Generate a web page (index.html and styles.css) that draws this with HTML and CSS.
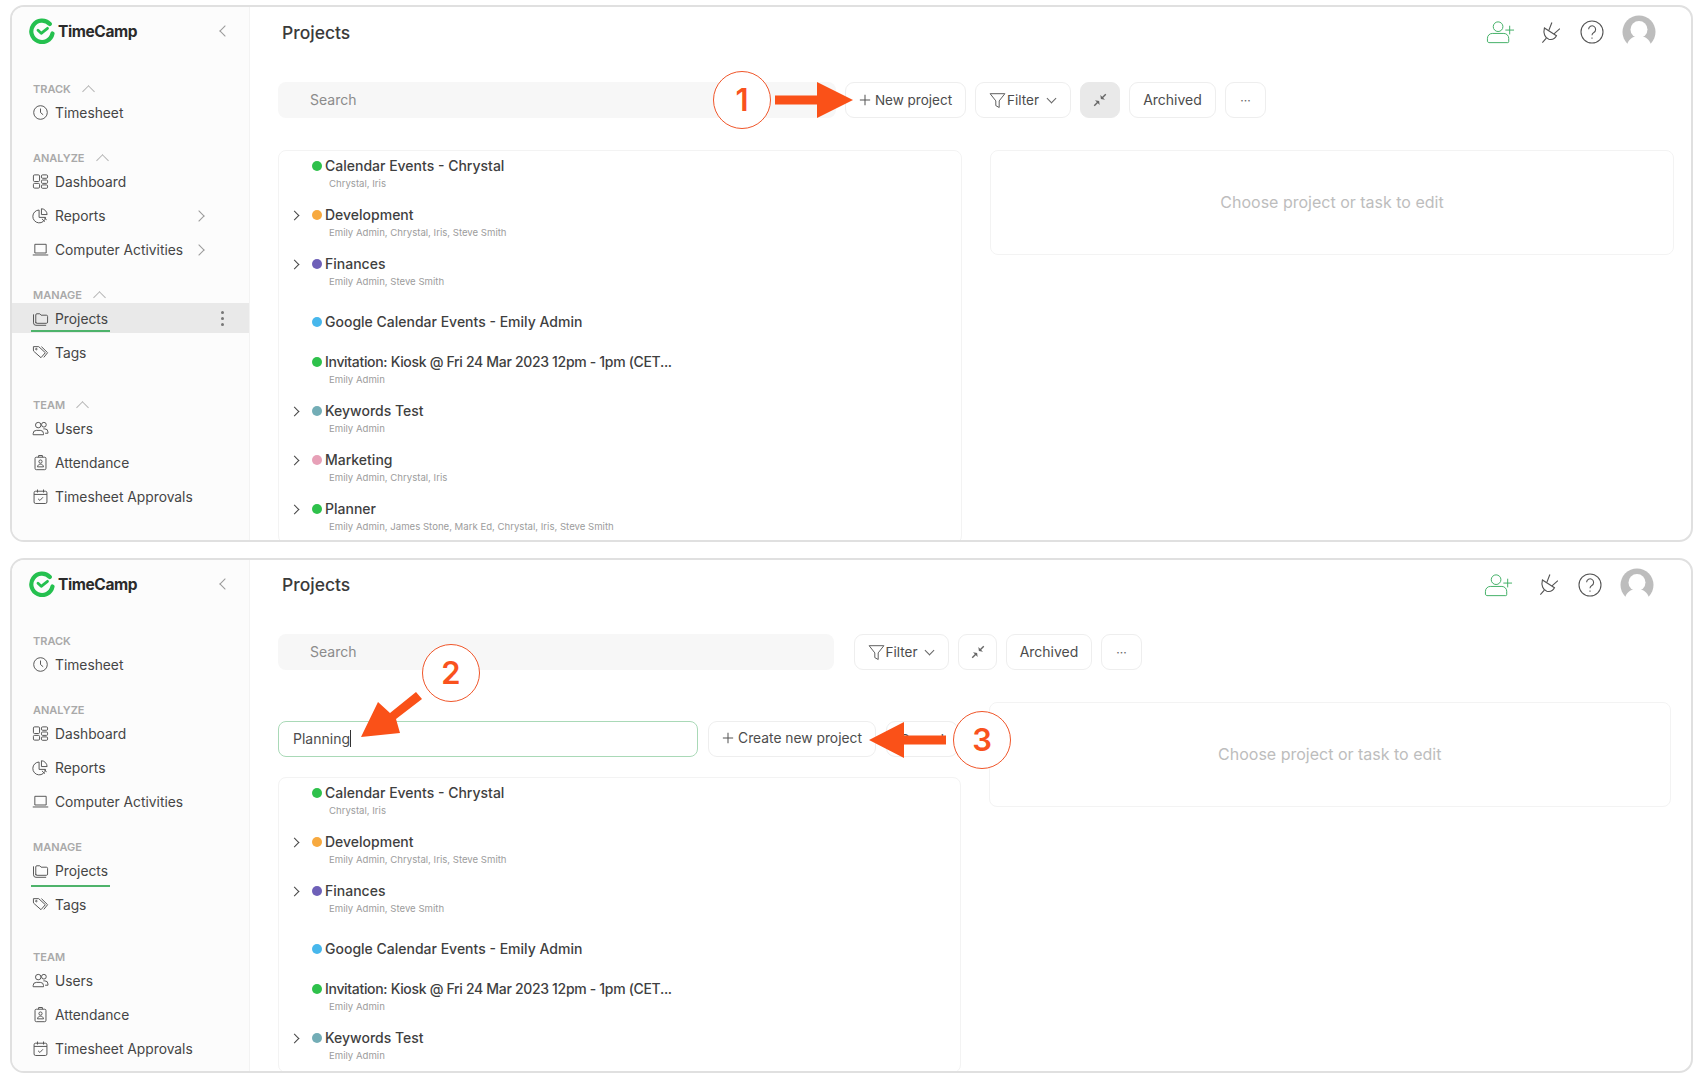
FILE: index.html
```html
<!DOCTYPE html>
<html lang="en">
<head>
<meta charset="utf-8">
<title>TimeCamp Projects</title>
<link rel="stylesheet" href="styles.css">
</head>
<body>
<svg class="defs" width="0" height="0" aria-hidden="true">
  <symbol id="i-clock" viewBox="0 0 18 18"><circle cx="9" cy="9" r="7.2"/><path d="M9 4.8V9l2.8 2.4"/></symbol>
  <symbol id="i-dash" viewBox="0 0 18 18"><rect x="1.5" y="2" width="6.5" height="7" rx="1.2"/><rect x="1.5" y="11" width="6.5" height="5" rx="1.2"/><rect x="10" y="2" width="6.5" height="3.6" rx="1.2"/><rect x="10" y="7.4" width="6.5" height="3.6" rx="1.2"/><rect x="10" y="12.6" width="6.5" height="3.6" rx="1.2"/></symbol>
  <symbol id="i-reports" viewBox="0 0 18 18"><path d="M7.5 3.2A6.8 6.8 0 1 0 14.4 11H7.5z"/><path d="M10 1.8a6.4 6.4 0 0 1 6 6.2h-6z"/><path d="M10.5 12.5l3 3M13 11.5l2.5 2"/></symbol>
  <symbol id="i-laptop" viewBox="0 0 18 18"><path d="M3 3.5h12v9.2H3zM.8 14.8h16.4"/></symbol>
  <symbol id="i-folder" viewBox="0 0 18 18"><path d="M4 14V5.2a1.2 1.2 0 0 1 1.2-1.2h3l1.4 1.5h5.6a1.3 1.3 0 0 1 1.3 1.3v6a1.3 1.3 0 0 1-1.3 1.3H5.4A1.4 1.4 0 0 1 4 12.6"/><path d="M1.6 4.6v9a2.6 2.6 0 0 0 2.6 2.6H15"/></symbol>
  <symbol id="i-tag" viewBox="0 0 18 18"><path d="M1.5 4.2V2.8h5.6l7 6.4-4.6 5.3-7-6.2a2 2 0 0 1-1-1.8z"/><path d="M10 2.8l6.5 6.4-4 5"/><circle cx="4.6" cy="5.4" r=".8"/></symbol>
  <symbol id="i-users" viewBox="0 0 18 18"><circle cx="6.6" cy="5.4" r="2.9"/><circle cx="12.6" cy="5" r="2.5"/><path d="M1.2 15.6v-1.2a3.4 3.4 0 0 1 3.4-3.4h4.2a3.4 3.4 0 0 1 3.4 3.4v1.2z"/><path d="M12 9.4h1.6a3.3 3.3 0 0 1 3.3 3.3V14h-3"/></symbol>
  <symbol id="i-badge" viewBox="0 0 18 18"><rect x="3.2" y="3.4" width="11.6" height="13.2" rx="1.4"/><path d="M7 3.4V1.6h4v1.8"/><circle cx="9" cy="8" r="1.7"/><path d="M5.8 13.6c.4-2 1.5-2.8 3.2-2.8s2.8.8 3.2 2.8z"/></symbol>
  <symbol id="i-cal" viewBox="0 0 18 18"><rect x="2.2" y="3.4" width="13.6" height="13" rx="1.6"/><path d="M2.2 6.8h13.6M5.8 1.6v3.2M12.2 1.6v3.2M6.4 11.4l2 1.8 3.2-3.4"/></symbol>
  <symbol id="i-pin" viewBox="0 0 18 18"><path d="M15.5 2.5L11 7M2.500 15.500L7 11"/><path class="pin-head" d="M9.400 3.400l.6 4.600 4.600.6zM3.400 9.400l4.600.6.6 4.600z"/></symbol>
  <symbol id="i-filter" viewBox="0 0 18 18"><path d="M1.2 1.800h15.600L10.800 9.400v7l-3.600-2V9.400z"/></symbol>
  <symbol id="i-plus" viewBox="0 0 14 14"><path d="M7 1v12M1 7h12"/></symbol>
  <symbol id="i-logo" viewBox="0 0 26 26"><path class="logo-arc" d="M20.8 6A10.7 10.700 0 1 0 23.500 15.500"/><path class="logo-check" d="M9 12.300l3.200 3 6.300-5"/></symbol>
  <symbol id="i-add" viewBox="0 0 30 24"><circle cx="12.5" cy="6.500" r="5"/><path d="M1.500 22v-3.500a5 5 0 0 1 5-5h12a5 5 0 0 1 5 5V22a1 1 0 0 1-1 1H3z"/><path d="M20 10h9M24.500 5.500v9"/></symbol>
  <symbol id="i-plug" viewBox="0 0 22 24"><path d="M3.600 7.200l12.600 8.200c-1.600 3-4.600 4.500-8 3.600C4.400 17.800 2 13 3.600 7.200z"/><path d="M8.200 9.800L11.400 1.600M13.600 13.400l6.200-5.400M5.600 18L1.400 22.600"/></symbol>
  <symbol id="i-help" viewBox="0 0 24 24"><circle cx="12" cy="12" r="11"/><path d="M8.600 9.200A3.500 3.500 0 1 1 13.800 12.400c-1.200.7-1.800 1.400-1.800 2.800"/><path d="M12 17.400v1.400"/></symbol>
</svg>

<main class="page">

  <section class="window">
    <aside class="sidebar">
      <div class="brand">
        <svg class="logo"><use href="#i-logo"/></svg>
        <span class="brand-name">TimeCamp</span>
        <span class="chev chev-left brand-toggle"></span>
      </div>
      <div class="nav-label">TRACK <span class="chev chev-up"></span></div>
      <div class="nav-item"><svg class="nav-icon"><use href="#i-clock"/></svg>Timesheet</div>
      <div class="nav-label nav-gap">ANALYZE <span class="chev chev-up"></span></div>
      <div class="nav-item"><svg class="nav-icon"><use href="#i-dash"/></svg>Dashboard</div>
      <div class="nav-item"><svg class="nav-icon"><use href="#i-reports"/></svg>Reports<span class="chev chev-right nav-more"></span></div>
      <div class="nav-item"><svg class="nav-icon"><use href="#i-laptop"/></svg>Computer Activities<span class="chev chev-right nav-more"></span></div>
      <div class="nav-label nav-gap">MANAGE <span class="chev chev-up"></span></div>
      <div class="nav-item is-active is-shaded"><svg class="nav-icon"><use href="#i-folder"/></svg>Projects<span class="kebab"><i></i><i></i><i></i></span></div>
      <div class="nav-item"><svg class="nav-icon"><use href="#i-tag"/></svg>Tags</div>
      <div class="nav-label nav-gap-lg">TEAM <span class="chev chev-up"></span></div>
      <div class="nav-item"><svg class="nav-icon"><use href="#i-users"/></svg>Users</div>
      <div class="nav-item"><svg class="nav-icon"><use href="#i-badge"/></svg>Attendance</div>
      <div class="nav-item"><svg class="nav-icon"><use href="#i-cal"/></svg>Timesheet Approvals</div>
    </aside>
    <div class="content">
      <header class="topbar">
        <h1 class="title">Projects</h1>
        <div class="top-icons">
          <svg class="ti ti-add"><use href="#i-add"/></svg>
          <svg class="ti ti-plug"><use href="#i-plug"/></svg>
          <svg class="ti ti-help"><use href="#i-help"/></svg>
          <svg class="avatar" viewBox="0 0 34 34"><circle class="av-bg" cx="17" cy="17" r="16.5"/><circle class="av-fg" cx="17" cy="14.5" r="8.5"/><path class="av-fg" d="M4 34c1-9 6-13 13-13s12 4 13 13z"/></svg>
        </div>
      </header>
      <div class="toolbar">
        <div class="search">Search</div>
        <button class="btn btn-new"><svg class="btn-plus"><use href="#i-plus"/></svg>New project</button>
        <button class="btn btn-filter"><svg class="btn-icon"><use href="#i-filter"/></svg>Filter<span class="chev chev-down"></span></button>
        <button class="btn btn-pin is-on"><svg class="btn-icon"><use href="#i-pin"/></svg></button>
        <button class="btn btn-arch">Archived</button>
        <button class="btn btn-dots">···</button>
      </div>
      <div class="panes">
        <div class="list-col">
          <div class="card list">
            <div class="row"><span class="twist"></span><span class="dot c-green"></span><div class="name">Calendar Events - Chrystal</div><div class="sub">Chrystal, Iris</div></div>
            <div class="row"><span class="twist"><span class="chev chev-right dark"></span></span><span class="dot c-orange"></span><div class="name">Development</div><div class="sub">Emily Admin, Chrystal, Iris, Steve Smith</div></div>
            <div class="row"><span class="twist"><span class="chev chev-right dark"></span></span><span class="dot c-purple"></span><div class="name">Finances</div><div class="sub">Emily Admin, Steve Smith</div></div>
            <div class="row row-solo"><span class="twist"></span><span class="dot c-blue"></span><div class="name">Google Calendar Events - Emily Admin</div></div>
            <div class="row"><span class="twist"></span><span class="dot c-green"></span><div class="name name-tight">Invitation: Kiosk @ Fri 24 Mar 2023 12pm - 1pm (CET...</div><div class="sub">Emily Admin</div></div>
            <div class="row"><span class="twist"><span class="chev chev-right dark"></span></span><span class="dot c-teal"></span><div class="name">Keywords Test</div><div class="sub">Emily Admin</div></div>
            <div class="row"><span class="twist"><span class="chev chev-right dark"></span></span><span class="dot c-pink"></span><div class="name">Marketing</div><div class="sub">Emily Admin, Chrystal, Iris</div></div>
            <div class="row"><span class="twist"><span class="chev chev-right dark"></span></span><span class="dot c-green"></span><div class="name">Planner</div><div class="sub">Emily Admin, James Stone, Mark Ed, Chrystal, Iris, Steve Smith</div></div>
          </div>
        </div>
        <div class="card empty">Choose project or task to edit</div>
      </div>
    </div>
  </section>

  <section class="window window-b">
    <aside class="sidebar">
      <div class="brand">
        <svg class="logo"><use href="#i-logo"/></svg>
        <span class="brand-name">TimeCamp</span>
        <span class="chev chev-left brand-toggle"></span>
      </div>
      <div class="nav-label">TRACK</div>
      <div class="nav-item"><svg class="nav-icon"><use href="#i-clock"/></svg>Timesheet</div>
      <div class="nav-label nav-gap">ANALYZE</div>
      <div class="nav-item"><svg class="nav-icon"><use href="#i-dash"/></svg>Dashboard</div>
      <div class="nav-item"><svg class="nav-icon"><use href="#i-reports"/></svg>Reports</div>
      <div class="nav-item"><svg class="nav-icon"><use href="#i-laptop"/></svg>Computer Activities</div>
      <div class="nav-label nav-gap">MANAGE</div>
      <div class="nav-item is-active"><svg class="nav-icon"><use href="#i-folder"/></svg>Projects</div>
      <div class="nav-item"><svg class="nav-icon"><use href="#i-tag"/></svg>Tags</div>
      <div class="nav-label nav-gap-lg">TEAM</div>
      <div class="nav-item"><svg class="nav-icon"><use href="#i-users"/></svg>Users</div>
      <div class="nav-item"><svg class="nav-icon"><use href="#i-badge"/></svg>Attendance</div>
      <div class="nav-item"><svg class="nav-icon"><use href="#i-cal"/></svg>Timesheet Approvals</div>
    </aside>
    <div class="content">
      <header class="topbar">
        <h1 class="title">Projects</h1>
        <div class="top-icons">
          <svg class="ti ti-add"><use href="#i-add"/></svg>
          <svg class="ti ti-plug"><use href="#i-plug"/></svg>
          <svg class="ti ti-help"><use href="#i-help"/></svg>
          <svg class="avatar" viewBox="0 0 34 34"><circle class="av-bg" cx="17" cy="17" r="16.5"/><circle class="av-fg" cx="17" cy="14.5" r="8.5"/><path class="av-fg" d="M4 34c1-9 6-13 13-13s12 4 13 13z"/></svg>
        </div>
      </header>
      <div class="toolbar">
        <div class="search search-wide">Search</div>
        <button class="btn btn-filter"><svg class="btn-icon"><use href="#i-filter"/></svg>Filter<span class="chev chev-down"></span></button>
        <button class="btn btn-pin"><svg class="btn-icon"><use href="#i-pin"/></svg></button>
        <button class="btn btn-arch">Archived</button>
        <button class="btn btn-dots">···</button>
      </div>
      <div class="panes">
        <div class="list-col">
          <div class="new-row">
            <div class="new-input">Planning<span class="caret"></span></div>
            <button class="btn btn-create"><svg class="btn-plus"><use href="#i-plus"/></svg>Create new project</button>
            <button class="btn btn-cancel">Cancel</button>
          </div>
          <div class="card list">
            <div class="row"><span class="twist"></span><span class="dot c-green"></span><div class="name">Calendar Events - Chrystal</div><div class="sub">Chrystal, Iris</div></div>
            <div class="row"><span class="twist"><span class="chev chev-right dark"></span></span><span class="dot c-orange"></span><div class="name">Development</div><div class="sub">Emily Admin, Chrystal, Iris, Steve Smith</div></div>
            <div class="row"><span class="twist"><span class="chev chev-right dark"></span></span><span class="dot c-purple"></span><div class="name">Finances</div><div class="sub">Emily Admin, Steve Smith</div></div>
            <div class="row row-solo"><span class="twist"></span><span class="dot c-blue"></span><div class="name">Google Calendar Events - Emily Admin</div></div>
            <div class="row"><span class="twist"></span><span class="dot c-green"></span><div class="name name-tight">Invitation: Kiosk @ Fri 24 Mar 2023 12pm - 1pm (CET...</div><div class="sub">Emily Admin</div></div>
            <div class="row"><span class="twist"><span class="chev chev-right dark"></span></span><span class="dot c-teal"></span><div class="name">Keywords Test</div><div class="sub">Emily Admin</div></div>
          </div>
        </div>
        <div class="card empty">Choose project or task to edit</div>
      </div>
    </div>
  </section>

  <svg class="annotations" viewBox="0 0 1701 1078">
    <circle class="ring" cx="742" cy="100" r="28.5"/>
    <text class="num" x="742" y="111">1</text>
    <path class="arrow" d="M775 95.500H817V82L853 100L817 118V104.500H775z"/>

    <circle class="ring" cx="451" cy="673" r="28.5"/>
    <text class="num" x="451" y="684">2</text>
    <path class="arrow" d="M416 692L422 699L396 719L400 733L361 737L378 702L390 713z"/>

    <circle class="ring" cx="982" cy="740" r="28.5"/>
    <text class="num" x="982" y="751">3</text>
    <path class="arrow" d="M946 735.500H904V722L869 740L904 758V744.500H946z"/>
  </svg>
</main>
</body>
</html>
```

FILE: styles.css
```css
* { box-sizing: border-box; }
html, body { margin: 0; padding: 0; background: #fff; }
body { font-family: Inter, "Liberation Sans", sans-serif; color: #3e3e3e; overflow: hidden; }
.defs { position: absolute; }

.page {
  position: relative;
  width: 1701px;
  height: 1078px;
  padding: 5px 8px 5px 10px;
  display: flex;
  flex-direction: column;
  gap: 16px;
}

.window {
  height: 537px;
  flex: none;
  display: flex;
  border: 2px solid #e0e0e0;
  border-radius: 14px;
  overflow: hidden;
  background: #fff;
}
.window-b { height: 515px; }

/* sidebar */
.sidebar {
  width: 238px;
  flex: none;
  background: #fcfcfc;
  border-right: 1px solid #f3f3f3;
}
.brand {
  height: 50px;
  display: flex;
  align-items: center;
  padding: 0 0 2px 17px;
  margin-bottom: 25px;
}
.window-b .brand { margin-bottom: 24px; }
.logo { width: 26px; height: 26px; }
.logo-arc { fill: none; stroke: #25c04f; stroke-width: 4.2; stroke-linecap: round; }
.logo-check { fill: none; stroke: #25c04f; stroke-width: 2.8; stroke-linecap: round; stroke-linejoin: round; }
.brand-name { margin-left: 3px; font-size: 15.5px; font-weight: 700; letter-spacing: -.4px; color: #2b2b2b; }
.brand-toggle { margin-left: auto; margin-right: 20px; }

.nav-label {
  height: 14px;
  padding-left: 21px;
  display: flex;
  align-items: center;
  gap: 13px;
  font-size: 11px;
  font-weight: 600;
  color: #a9a9a9;
}
.nav-gap { margin-top: 21px; }
.nav-gap-lg { margin-top: 28px; }

.nav-item {
  position: relative;
  height: 34px;
  padding: 0 46px 1px 20px;
  display: flex;
  align-items: center;
  gap: 6px;
  font-size: 13.8px;
  color: #454545;
}
.nav-icon {
  width: 17px;
  height: 17px;
  flex: none;
  fill: none;
  stroke: #505050;
  stroke-width: 1;
}
.nav-more { margin-left: auto; }
.is-active::after {
  content: "";
  position: absolute;
  left: 19px;
  bottom: 1px;
  width: 79px;
  height: 2px;
  background: #4eb36b;
}
.is-shaded {
  height: 30px;
  margin: 1px 0 3px;
  padding-top: 1px;
  padding-bottom: 0;
  padding-right: 25px;
  background: #e9e9e9;
}
.kebab { margin-left: auto; display: flex; flex-direction: column; gap: 3px; }
.kebab i { width: 3px; height: 3px; border-radius: 50%; background: #777; }

/* chevrons */
.chev { display: inline-block; width: 8px; height: 8px; border: solid #9a9a9a; border-width: 0 0 1px 1px; flex: none; }
.chev-left { transform: rotate(45deg); }
.chev-right { transform: rotate(225deg); }
.chev-up { width: 9px; height: 9px; transform: rotate(135deg); margin-top: 5px; border-color: #b5b5b5; }
.chev-down { width: 7px; height: 7px; transform: rotate(-45deg); margin: -3px 2px 0 9px; border-color: #666; }
.dark { width: 7px; height: 7px; border-color: #444; }

/* content */
.content { flex: 1; min-width: 0; padding: 0 17px 0 28px; overflow: hidden; }
.window-b .content { padding-right: 20px; }

.topbar { height: 50px; display: flex; align-items: center; justify-content: space-between; }
.window-b .topbar { height: 49px; }
.title { margin: 0 0 0 4px; font-size: 17.5px; font-weight: 500; color: #3a3a3a; }
.top-icons { display: flex; align-items: center; margin-right: 18px; }
.window-b .top-icons { margin-right: 17px; }
.ti { fill: none; stroke: #555; stroke-width: 1; }
.ti-add { width: 29px; height: 24px; stroke: #3fae63; }
.ti-plug { width: 21px; height: 23px; margin-left: 26px; stroke-width: 1.2; }
.ti-help { width: 24px; height: 24px; margin-left: 18px; stroke-width: 1.1; }
.avatar { width: 34px; height: 34px; margin-left: 18px; }
.av-bg { fill: #bdbdbd; }
.av-fg { fill: #fff; }

.toolbar { margin-top: 25px; height: 36px; display: flex; gap: 9px; }
.search {
  width: 558px;
  background: #f7f7f7;
  border-radius: 8px;
  padding: 0 0 2px 32px;
  display: flex;
  align-items: center;
  font-size: 14px;
  color: #8b8b8b;
}
.search-wide { width: 556px; margin-right: 11px; }

.btn {
  height: 36px;
  padding: 0;
  display: inline-flex;
  align-items: center;
  justify-content: center;
  background: #fff;
  border: 1px solid #eeeeee;
  border-radius: 9px;
  font: 400 13.5px Inter, "Liberation Sans", sans-serif;
  color: #4c4c4c;
}
.btn-new { width: 121px; }
.btn-filter { width: 96px; }
.btn-pin { width: 40px; }
.btn-arch { width: 87px; padding-bottom: 2px; font-size: 14px; }
.btn-dots { width: 41px; letter-spacing: 0; font-size: 12px; color: #666; }
.window-b .btn-filter { width: 95px; }
.window-b .btn-pin { width: 39px; }
.window-b .btn-arch { width: 86px; }
.btn-create { width: 168px; padding-bottom: 2px; font-size: 13.8px; }
.btn-cancel { width: 72px; }
.btn-plus { width: 12px; height: 12px; margin-right: 4px; fill: none; stroke: #555; stroke-width: 1.2; }
.btn-icon { width: 17px; height: 17px; fill: none; stroke: #555; stroke-width: 1; }
.btn-filter .btn-icon { margin-right: 1px; }
.is-on { background: #e9e9e9; border-color: #e9e9e9; }
.btn-pin .btn-icon { width: 16px; height: 16px; stroke: #666; stroke-width: 1.6; }
.pin-head { fill: #666; stroke: none; }

.panes { margin-top: 32px; display: grid; grid-template-columns: 1fr 1fr; gap: 28px; align-items: start; }
.list-col { min-width: 0; }
.new-row { margin: 19px 0 20px; display: flex; gap: 10px; height: 36px; white-space: nowrap; }
.new-input {
  width: 420px;
  flex: none;
  border: 1px solid #a9d9b7;
  border-radius: 8px;
  padding: 0 0 2px 14px;
  display: flex;
  align-items: center;
  font-size: 14px;
  color: #4c4c4c;
}
.caret { width: 1px; height: 17px; background: #333; }

.card { border: 1px solid #f3f3f3; border-radius: 8px; background: #fff; }
.list { margin: 0; }
.empty {
  height: 105px;
  padding-bottom: 2px;
  display: flex;
  align-items: center;
  justify-content: center;
  font-size: 16px;
  color: #bdbdbd;
}

.row {
  height: 49px;
  padding-top: 5px;
  display: grid;
  grid-template-columns: 33px 13px 1fr;
  grid-template-rows: 20px 16px;
  align-items: center;
}
.row-solo { padding-top: 14px; }
.twist { display: flex; justify-content: center; padding-right: 2px; }
.dot { width: 10px; height: 10px; border-radius: 50%; }
.name { margin-bottom: 2px; font-size: 14px; font-weight: 500; color: #3f3f3f; white-space: nowrap; }
.name-tight { letter-spacing: -.32px; }
.sub { grid-column: 3; margin-bottom: 1px; font-size: 9.6px; color: #9c9c9c; padding-left: 4px; white-space: nowrap; }
.c-green { background: #2ec14b; }
.c-orange { background: #f7a93f; }
.c-purple { background: #6e60b8; }
.c-blue { background: #47b7ec; }
.c-teal { background: #73adb6; }
.c-pink { background: #e7a0b7; }

/* annotation overlay */
.annotations { position: absolute; left: 0; top: 0; width: 1701px; height: 1078px; pointer-events: none; }
.ring { fill: #fff; stroke: #f0562a; stroke-width: 1; }
.num { fill: #f9521e; font: 600 31px Inter, "Liberation Sans", sans-serif; text-anchor: middle; }
.arrow { fill: #fa5118; }
```
